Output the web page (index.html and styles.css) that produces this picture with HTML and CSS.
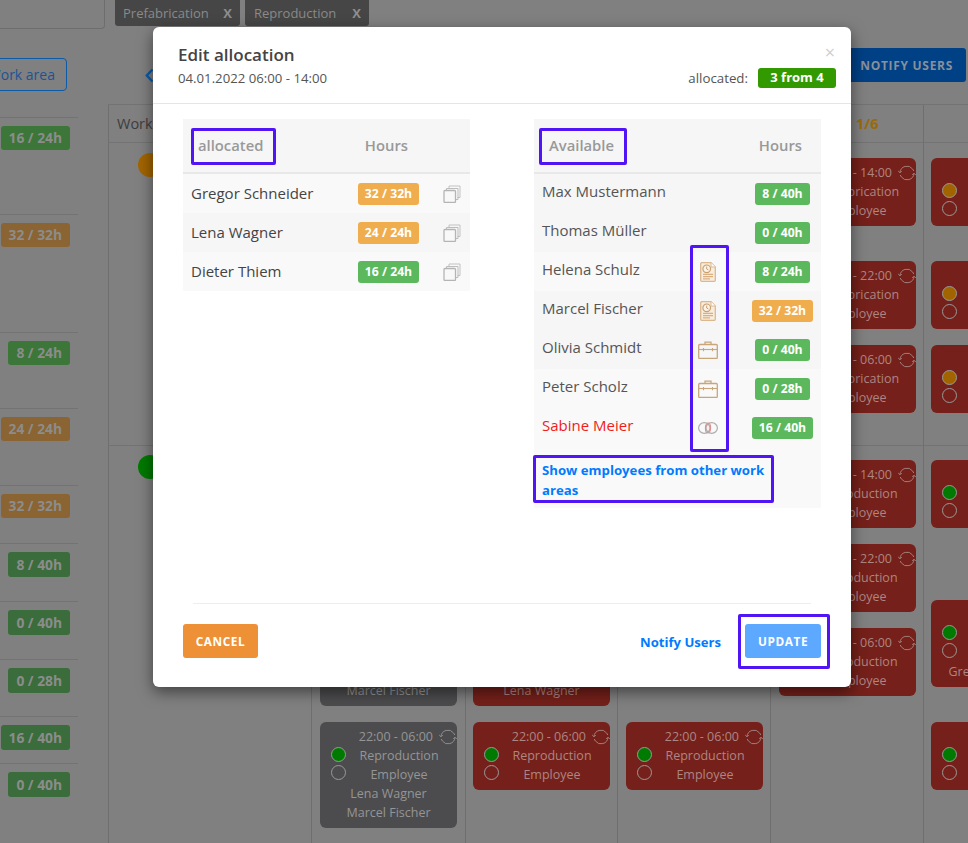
FILE: index.html
```html
<!DOCTYPE html>
<html lang="en">
<head>
<meta charset="utf-8">
<title>Edit allocation</title>
<link rel="stylesheet" href="styles.css">
</head>
<body>
<svg class="defs" width="0" height="0" aria-hidden="true">
  <symbol id="sync" viewBox="0 0 18 18">
    <path d="M2 8.500A7 7 0 0 1 14.600 5L15.800 7M16 9.500A7 7 0 0 1 3.400 13L2.200 11" fill="none" stroke="currentColor" stroke-width="1"/>
    <path d="M0.200 7L2 8.800L3.800 7M14.200 11L16 9.200L17.800 11" fill="none" stroke="currentColor" stroke-width="1"/>
  </symbol>
  <symbol id="copy" viewBox="0 0 18 18">
    <path d="M6 3.500V1h11v11.500h-2.500" fill="none" stroke="#c2c2c2" stroke-width="1"/>
    <path d="M3.500 5.500V3.500H15V14.500H13" fill="none" stroke="#bcbcbc" stroke-width="1"/>
    <rect x="1" y="5.500" width="11.500" height="12" rx="1" fill="#f8f8f8" stroke="#b4b4b4" stroke-width="1.300"/>
  </symbol>
  <symbol id="doc" viewBox="0 0 16 20">
    <path d="M1.500 0.700h9.500l4.300 4.300V18.300a1 1 0 0 1-1 1H1.700a1 1 0 0 1-1-1V1.500z" fill="#f8ecdc" stroke="#dcb88f" stroke-width="1.300"/>
    <path d="M11 0.700V5h4.300" fill="#fff" stroke="#dcb88f" stroke-width="1"/>
    <circle cx="6.700" cy="6.800" r="3.800" fill="#fbf3e8" stroke="#c99f70" stroke-width="1.200"/>
    <path d="M6.700 4.500v2.500l1.700 1" fill="none" stroke="#c99f70" stroke-width="1"/>
    <path d="M3 12.300h10M3 14.600h10M3 16.900h7" fill="none" stroke="#d9b084" stroke-width="1.200"/>
  </symbol>
  <symbol id="case" viewBox="0 0 20 18">
    <path d="M7 3.500V1.200h6v2.300" fill="none" stroke="#c9a67a" stroke-width="1.300"/>
    <rect x="0.700" y="3.500" width="18.600" height="14" rx="1" fill="none" stroke="#c9a67a" stroke-width="1.300"/>
    <path d="M0.700 8.500h18.600" fill="none" stroke="#c9a67a" stroke-width="1.100"/>
    <path d="M5.500 7v3.200M14.500 7v3.200" fill="none" stroke="#c9a67a" stroke-width="1.100"/>
  </symbol>
  <symbol id="rings" viewBox="0 0 20 12">
    <ellipse cx="10" cy="6" rx="2.600" ry="5" fill="#fdeeee" stroke="#f28080" stroke-width="1.100"/>
    <ellipse cx="6.300" cy="6" rx="5.700" ry="5.300" fill="none" stroke="#adadad" stroke-width="1.200"/>
    <ellipse cx="13.700" cy="6" rx="5.700" ry="5.300" fill="none" stroke="#adadad" stroke-width="1.200"/>
  </symbol>
</svg>

<div class="page">
  <div class="filters">
    <div class="filter-box"></div>
    <div class="chip"><span>Prefabrication</span><b>X</b></div>
    <div class="chip"><span>Reproduction</span><b>X</b></div>
  </div>
  <div class="toolbar">
    <button class="area-btn">Work area</button>
    <svg class="back" width="9" height="15" viewBox="0 0 9 15"><path d="M7.500 1.500L1.800 7.500L7.500 13.500" fill="none" stroke="#0d5aa8" stroke-width="2.400"/></svg>
    <button class="notify-btn">NOTIFY USERS</button>
  </div>

  <div class="board">
    <div class="totals">
      <div class="total"><span class="pill pill-green">16 / 24h</span></div>
      <div class="total"><span class="pill pill-amber">32 / 32h</span></div>
      <div class="total"><span class="pill pill-green">8 / 24h</span></div>
      <div class="total"><span class="pill pill-amber">24 / 24h</span></div>
      <div class="total"><span class="pill pill-amber">32 / 32h</span></div>
      <div class="total"><span class="pill pill-dark">8 / 40h</span></div>
      <div class="total"><span class="pill pill-dark">0 / 40h</span></div>
      <div class="total"><span class="pill pill-dark">0 / 28h</span></div>
      <div class="total"><span class="pill pill-dark">16 / 40h</span></div>
      <div class="total"><span class="pill pill-dark">0 / 40h</span></div>
    </div>

    <div class="calendar">
      <div class="cal-col col-area">
        <div class="col-title">Work area</div>
        <span class="big-dot dot-orange r1"></span>
        <span class="big-dot dot-green r4"></span>
      </div>
      <div class="cal-col col-day col-d1">
        <div class="col-title"></div>
        <div class="card card-grey r56 end">
          <div class="card-time">22:00 - 06:00<svg class="sync"><use href="#sync"/></svg></div>
          <div class="card-mid"><div class="dots"><i class="dot dot-fill-green"></i><i class="dot"></i></div><div class="card-role">Reproduction<br>Employee</div></div>
          <div class="card-person">Lena Wagner</div>
          <div class="card-person">Marcel Fischer</div>
        </div>
        <div class="card card-grey r7">
          <div class="card-time">22:00 - 06:00<svg class="sync"><use href="#sync"/></svg></div>
          <div class="card-mid"><div class="dots"><i class="dot dot-fill-green"></i><i class="dot"></i></div><div class="card-role">Reproduction<br>Employee</div></div>
          <div class="card-person">Lena Wagner</div>
          <div class="card-person">Marcel Fischer</div>
        </div>
      </div>
      <div class="cal-col col-day col-d2">
        <div class="col-title"></div>
        <div class="card r56 end">
          <div class="card-time">14:00 - 22:00<svg class="sync"><use href="#sync"/></svg></div>
          <div class="card-mid"><div class="dots"><i class="dot dot-fill-green"></i><i class="dot"></i></div><div class="card-role">Reproduction<br>Employee</div></div>
          <div class="card-person">Lena Wagner</div>
        </div>
        <div class="card r7">
          <div class="card-time">22:00 - 06:00<svg class="sync"><use href="#sync"/></svg></div>
          <div class="card-mid"><div class="dots"><i class="dot dot-fill-green"></i><i class="dot"></i></div><div class="card-role">Reproduction<br>Employee</div></div>
        </div>
      </div>
      <div class="cal-col col-day col-d3">
        <div class="col-title"></div>
        <div class="card r7">
          <div class="card-time">22:00 - 06:00<svg class="sync"><use href="#sync"/></svg></div>
          <div class="card-mid"><div class="dots"><i class="dot dot-fill-green"></i><i class="dot"></i></div><div class="card-role">Reproduction<br>Employee</div></div>
        </div>
      </div>
      <div class="cal-col col-day col-d4">
        <div class="col-title title-ratio">1/6</div>
        <div class="card r1">
          <div class="card-time">06:00 - 14:00<svg class="sync"><use href="#sync"/></svg></div>
          <div class="card-mid"><div class="dots"><i class="dot dot-fill-orange"></i><i class="dot"></i></div><div class="card-role">Prefabrication<br>Employee</div></div>
        </div>
        <div class="card r2">
          <div class="card-time">14:00 - 22:00<svg class="sync"><use href="#sync"/></svg></div>
          <div class="card-mid"><div class="dots"><i class="dot dot-fill-orange"></i><i class="dot"></i></div><div class="card-role">Prefabrication<br>Employee</div></div>
        </div>
        <div class="card r3">
          <div class="card-time">22:00 - 06:00<svg class="sync"><use href="#sync"/></svg></div>
          <div class="card-mid"><div class="dots"><i class="dot dot-fill-orange"></i><i class="dot"></i></div><div class="card-role">Prefabrication<br>Employee</div></div>
        </div>
        <div class="card r4">
          <div class="card-time">06:00 - 14:00<svg class="sync"><use href="#sync"/></svg></div>
          <div class="card-mid"><div class="dots"><i class="dot dot-fill-green"></i><i class="dot"></i></div><div class="card-role">Reproduction<br>Employee</div></div>
        </div>
        <div class="card r5">
          <div class="card-time">14:00 - 22:00<svg class="sync"><use href="#sync"/></svg></div>
          <div class="card-mid"><div class="dots"><i class="dot dot-fill-green"></i><i class="dot"></i></div><div class="card-role">Reproduction<br>Employee</div></div>
        </div>
        <div class="card r6">
          <div class="card-time">22:00 - 06:00<svg class="sync"><use href="#sync"/></svg></div>
          <div class="card-mid"><div class="dots"><i class="dot dot-fill-green"></i><i class="dot"></i></div><div class="card-role">Reproduction<br>Employee</div></div>
        </div>
      </div>
      <div class="cal-col col-day col-d5">
        <div class="col-title"></div>
        <div class="card r1"><div class="card-time"></div><div class="card-mid"><div class="dots"><i class="dot dot-fill-orange"></i><i class="dot"></i></div></div></div>
        <div class="card r2"><div class="card-time"></div><div class="card-mid"><div class="dots"><i class="dot dot-fill-orange"></i><i class="dot"></i></div></div></div>
        <div class="card r3"><div class="card-time"></div><div class="card-mid"><div class="dots"><i class="dot dot-fill-orange"></i><i class="dot"></i></div></div></div>
        <div class="card r4"><div class="card-time"></div><div class="card-mid"><div class="dots"><i class="dot dot-fill-green"></i><i class="dot"></i></div></div></div>
        <div class="card r56 lowered"><div class="card-time"></div><div class="card-mid"><div class="dots"><i class="dot dot-fill-green"></i><i class="dot"></i></div></div><div class="card-person">Gregor Schneider</div></div>
        <div class="card r7"><div class="card-time"></div><div class="card-mid"><div class="dots"><i class="dot dot-fill-green"></i><i class="dot"></i></div></div></div>
      </div>
    </div>
  </div>

  <div class="modal">
    <header class="modal-head">
      <div class="head-left">
        <h2 class="modal-title">Edit allocation</h2>
        <div class="modal-date">04.01.2022 06:00 - 14:00</div>
      </div>
      <div class="head-right">
        <span class="close">&times;</span>
        <div class="alloc-sum"><span>allocated:</span><span class="alloc-badge">3 from 4</span></div>
      </div>
    </header>

    <div class="modal-body">
      <section class="panel panel-left">
        <div class="panel-head">
          <span class="mark mark-allocated">allocated</span>
          <span class="hours-title">Hours</span>
        </div>
        <div class="row"><span class="name">Gregor Schneider</span><span class="hours"><span class="badge wide amber">32 / 32h</span></span><svg class="copy"><use href="#copy"/></svg></div>
        <div class="row row-alt"><span class="name">Lena Wagner</span><span class="hours"><span class="badge wide amber">24 / 24h</span></span><svg class="copy"><use href="#copy"/></svg></div>
        <div class="row"><span class="name">Dieter Thiem</span><span class="hours"><span class="badge wide green">16 / 24h</span></span><svg class="copy"><use href="#copy"/></svg></div>
      </section>

      <section class="panel panel-right">
        <div class="panel-head">
          <span class="mark mark-available">Available</span>
          <span class="hours-title">Hours</span>
        </div>
        <div class="row row-alt"><span class="name">Max Mustermann</span><span class="flag"></span><span class="hours"><span class="badge green">8 / 40h</span></span></div>
        <div class="row row-alt"><span class="name">Thomas Müller</span><span class="flag"></span><span class="hours"><span class="badge green">0 / 40h</span></span></div>
        <div class="row"><span class="name">Helena Schulz</span><span class="flag"><svg class="ico-doc"><use href="#doc"/></svg></span><span class="hours"><span class="badge green">8 / 24h</span></span></div>
        <div class="row row-alt"><span class="name">Marcel Fischer</span><span class="flag"><svg class="ico-doc"><use href="#doc"/></svg></span><span class="hours"><span class="badge wide amber">32 / 32h</span></span></div>
        <div class="row row-alt"><span class="name">Olivia Schmidt</span><span class="flag"><svg class="ico-case"><use href="#case"/></svg></span><span class="hours"><span class="badge green">0 / 40h</span></span></div>
        <div class="row"><span class="name">Peter Scholz</span><span class="flag"><svg class="ico-case"><use href="#case"/></svg></span><span class="hours"><span class="badge green">0 / 28h</span></span></div>
        <div class="row"><span class="name name-alert">Sabine Meier</span><span class="flag"><svg class="ico-rings"><use href="#rings"/></svg></span><span class="hours"><span class="badge wide green">16 / 40h</span></span></div>
        <a class="more-link" href="#">Show employees from other work areas</a>
        <div class="flag-mark"></div>
      </section>
    </div>

    <footer class="modal-foot">
      <button class="btn-cancel">CANCEL</button>
      <a class="foot-link" href="#">Notify Users</a>
      <div class="update-mark"><button class="btn-update">UPDATE</button></div>
    </footer>
  </div>
</div>
</body>
</html>
```

FILE: styles.css
```css
* { box-sizing: border-box; }
html, body { margin: 0; padding: 0; }
body { background: #808080; font-family: "Open Sans", "Liberation Sans", sans-serif; }
.defs { display: block; height: 0; }
.page { position: relative; width: 968px; height: 843px; overflow: hidden; background: #808080; }

/* page behind the dialog */
.filters { display: flex; height: 29px; align-items: flex-start; }
.filter-box { width: 105px; height: 29px; margin-right: 10px; border: 1px solid #6e6e6e; border-top: 0; border-left: 0; border-bottom-right-radius: 4px; }
.chip { display: flex; justify-content: space-between; align-items: center; width: 125px; height: 26px; margin-right: 5px; padding: 0 8px; background: #464646; border-radius: 0 0 3px 3px; color: #8a8a8a; font-size: 13px; }
.chip:last-child { width: 124px; margin-right: 0; padding-left: 9px; }
.chip b { font-size: 13px; color: #8e8e8e; }

.toolbar { position: relative; display: flex; align-items: flex-start; height: 75px; }
.area-btn { width: 87px; height: 33px; margin: 29px 0 0 -20px; padding: 0 11px 0 0; background: transparent; border: 1px solid #0d5aa8; border-radius: 4px; color: #1c5492; font: 14px "Open Sans", sans-serif; white-space: nowrap; text-align: right; }
.back { margin: 39px 0 0 78px; }
.notify-btn { margin: 19px 2px 0 auto; width: 130px; height: 34px; padding: 0 13px 0 0; text-align: right; background: #004085; border: 0; border-radius: 3px; color: #87909c; font: 700 12px "Open Sans", sans-serif; letter-spacing: .7px; }

.board { display: flex; height: 739px; }
.totals { display: grid; grid-template-rows: 97px 118px 76px 77px 58px 58px 58px 57px 47px 80px; width: 78px; margin: 13px 30px 0 0; height: 726px; flex: none; }
.total { display: flex; justify-content: flex-end; align-items: flex-start; padding: 8px 8px 0 0; border-top: 1px solid #737373; }
.pill { display: block; padding: 0 8px; height: 24px; line-height: 24px; border-radius: 3px; font-size: 13.800px; font-weight: 700; color: #8c8c8c; white-space: nowrap; }
.pill-green { background: #3c7639; }
.pill-amber { background: #8a6433; }
.pill-dark { height: 25px; line-height: 25px; background: #3b6c3c; }

.calendar { display: flex; flex: none; width: 860px; border-top: 1px solid #737373; }
.cal-col { display: grid; grid-template-columns: 1fr; grid-template-rows: 38px 118px 84px 100px 99px 84px 94px 122px; flex: none; border-left: 1px solid #6f6f6f; }
.cal-col::before { content: ""; grid-row: 1; grid-column: 1; border-bottom: 1px solid #737373; }
.cal-col::after { content: ""; grid-row: 5; grid-column: 1; border-top: 1px solid #737373; }
.col-area { width: 200px; margin-right: 3px; }
.col-d1 { width: 154px; }
.col-d2 { width: 152px; }
.col-d3 { width: 153px; }
.col-d4 { width: 153px; }
.col-d5 { width: 45px; }
.col-title { grid-row: 1; grid-column: 1; padding-left: 8px; line-height: 38px; font-size: 14.500px; color: #3d3d3d; white-space: nowrap; }
.title-ratio { padding-left: 85px; font-weight: 700; color: #9a6a08; }
.big-dot { grid-column: 1; width: 24px; height: 24px; margin: 10px 0 0 29px; border-radius: 50%; }
.dot-orange { background: #a26400; }
.dot-green { background: #007a00; }

.card { grid-column: 1; width: 137px; height: 68px; margin-left: 8px; padding: 5px 0 0; background: #75201a; border-radius: 6px; color: #ad8582; font-size: 12.500px; line-height: 19px; text-align: center; }
.col-d2 .card, .col-d5 .card { margin-left: 7px; }
.card-grey { height: 106px; background: #4c4c4e; color: #959595; }
.col-d2 .card.end { height: 87px; }
.r1 { grid-row: 2; margin-top: 15px; }
.big-dot.r1 { margin-top: 10px; }
.r2 { grid-row: 3; }
.r3 { grid-row: 4; }
.r4 { grid-row: 5; margin-top: 15px; }
.big-dot.r4 { margin-top: 10px; }
.r5 { grid-row: 6; }
.r6 { grid-row: 7; }
.r7 { grid-row: 8; }
.r56 { grid-row: 6 / 8; }
.end { align-self: end; margin-bottom: 16px; }
.lowered { align-self: start; height: 87px; margin-top: 56px; }
.card-time { display: flex; justify-content: flex-end; align-items: center; height: 19px; gap: 6px; white-space: nowrap; }
.sync { width: 18px; height: 18px; color: #a07e7b; flex: none; }
.card-grey .sync { color: #8d8d8d; }
.card-mid { display: flex; height: 38px; padding: 0 5px 0 11px; }
.dots { display: flex; flex-direction: column; gap: 3px; flex: none; width: 15px; padding-top: 1px; }
.dot { display: block; width: 15px; height: 15px; border: 1px solid #999; border-radius: 50%; }
.dot-fill-green { background: #007a00; }
.dot-fill-orange { background: #a26400; }
.card-role { flex: 1; }
.card-person { white-space: nowrap; }

/* dialog */
.modal { position: absolute; left: 153px; top: 27px; display: flex; flex-direction: column; width: 698px; height: 660px; background: #fff; border-radius: 6px; box-shadow: 0 5px 15px rgba(0,0,0,.5); }
.modal-head { display: flex; justify-content: space-between; height: 77px; padding: 0 15px 0 25px; border-bottom: 1px solid #e5e5e5; }
.head-left { padding-top: 15px; }
.modal-title { margin: 0; font-size: 17px; line-height: 25px; font-weight: 600; color: #444; }
.modal-date { font-size: 13.200px; line-height: 20px; margin-top: 1px; color: #555; }
.head-right { display: flex; flex-direction: column; align-items: flex-end; }
.close { margin: 16px 1px 0 0; font-size: 18px; line-height: 18px; color: #cfcfcf; }
.alloc-sum { display: flex; align-items: center; gap: 10px; margin-top: 7px; font-size: 13.300px; color: #555; }
.alloc-badge { width: 78px; height: 20px; line-height: 19px; text-align: center; background: #339900; border-radius: 3px; color: #fff; font-size: 13px; font-weight: 700; }

.modal-body { display: flex; gap: 64px; flex: 1; padding: 15px 30px 0; align-items: flex-start; }
.panel { position: relative; width: 287px; background: #f9f9f9; }
.panel-head { display: flex; height: 55px; padding-top: 9px; background: #f6f6f6; border-bottom: 2px solid #e8e8e8; color: #999; font-size: 14.800px; font-weight: 600; }
.mark { display: block; height: 37px; line-height: 28px; border: 3px solid #5115f5; border-radius: 2px; }
.mark-allocated { width: 85px; margin-left: 8px; padding-left: 4px; }
.mark-available { width: 88px; margin-left: 5px; padding-left: 7px; }
.hours-title { margin-left: auto; line-height: 35px; }
.panel-left .hours-title { margin-right: 62px; }
.panel-right .hours-title { margin-right: 19px; }
.row { display: flex; align-items: center; height: 39px; padding-left: 8px; font-size: 15px; color: #555; }
.row-alt { background: #f6f6f6; }
.panel-left .row { color: #444; padding-top: 1px; }
.name { flex: 1; white-space: nowrap; padding-bottom: 2px; }
.panel-right .name { padding-bottom: 5px; }
.name-alert { color: #f01c1c; }
.hours { display: flex; justify-content: center; width: 61px; flex: none; }
.badge { height: 22px; padding: 0 7.500px; line-height: 21px; border-radius: 3px; font-size: 12.200px; font-weight: 700; color: #fff; white-space: nowrap; }
.wide { padding: 0 6.500px; }
.amber { background: #f0ad4e; }
.green { background: #5cb85c; }
.copy { width: 18px; height: 18px; margin: 0 9px 0 24px; flex: none; }
.flag { display: flex; justify-content: center; align-items: center; width: 24px; height: 100%; margin-right: 32px; flex: none; }
.panel-right .hours { margin-right: 8px; }
.ico-doc { width: 16px; height: 20px; }
.ico-case { width: 20px; height: 18px; }
.ico-rings { width: 20px; height: 12px; }
.flag-mark { position: absolute; left: 156px; top: 126px; width: 39px; height: 207px; border: 3px solid #5115f5; border-radius: 2px; pointer-events: none; }
.more-link { display: block; width: 241px; height: 48px; margin: 8px 0 5px -1px; padding: 2px 6px 0; border: 3px solid #5115f5; border-radius: 2px; font-size: 13.200px; font-weight: 700; line-height: 20px; color: #007bff; text-decoration: none; }

.modal-foot { display: flex; align-items: flex-start; height: 84px; margin: 0 40px; padding: 10px 0 18px; border-top: 1px solid #eee; }
.btn-cancel { width: 75px; height: 34px; margin: 10px 0 0 -10px; background: #ee9035; border: 0; border-radius: 3px; color: #fff; font: 700 11.800px "Open Sans", sans-serif; letter-spacing: .6px; }
.foot-link { margin: 19px 17px 0 auto; font-size: 13.100px; font-weight: 700; color: #007bff; text-decoration: none; }
.update-mark { display: flex; justify-content: flex-start; width: 92px; height: 55px; margin-right: -19px; padding: 7px 0 0 4px; border: 3px solid #5115f5; border-radius: 2px; }
.btn-update { width: 76px; height: 34px; background: #5ca9ff; border: 0; border-radius: 3px; color: #fff; font: 700 11.800px "Open Sans", sans-serif; letter-spacing: .6px; }
```
